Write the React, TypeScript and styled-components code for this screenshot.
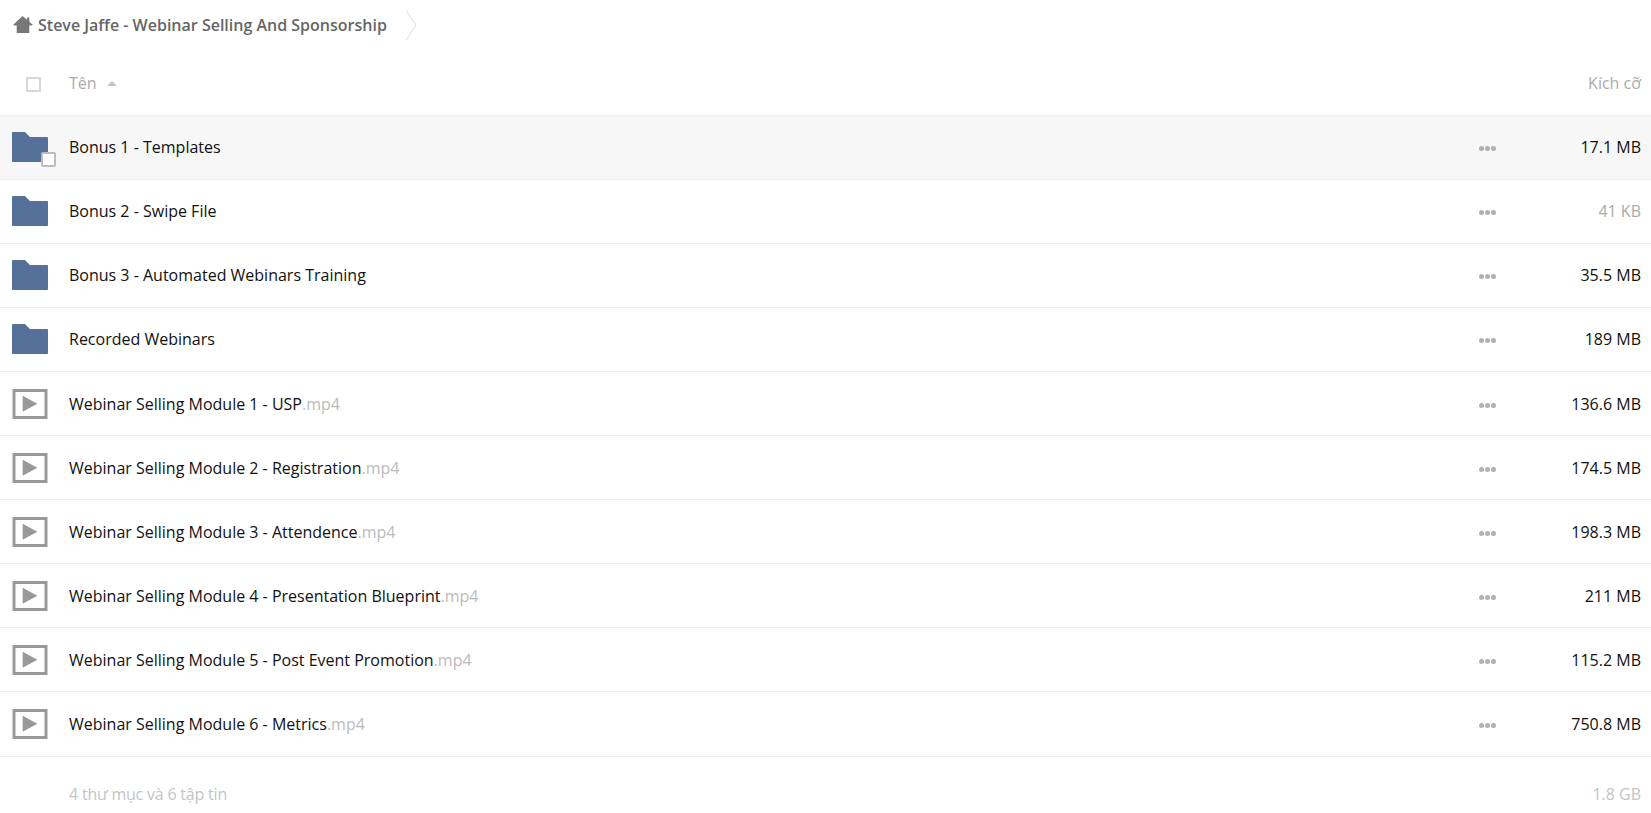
import React from "react";
import styled, {createGlobalStyle} from "styled-components";

const GlobalStyle = createGlobalStyle`
  html, body {
    margin: 0;
    padding: 0;
    background: #fff;
    font-family: "Open Sans", "Liberation Sans", sans-serif;
  }
`

const Page = styled.div`
  width: 1651px;
  height: 813px;
  overflow: hidden;
`

const Breadcrumb = styled.div`
  display: flex;
  align-items: center;
  height: 50px;
  padding-left: 13px;
`

const Crumb = styled.span`
  margin-left: 5px;
  font-size: 16px;
  font-weight: 600;
  color: #666;
  white-space: nowrap;
`

const Chevron = styled.svg`
  margin-left: 18px;
`

const Header = styled.div`
  display: flex;
  align-items: center;
  height: 65.6px;
  padding: 0 10px 0 26px;
  box-sizing: border-box;
  border-bottom: 1px solid #eee;
`

const HeaderCheck = styled.span`
  width: 15px;
  height: 15px;
  margin-top: 4px;
  box-sizing: border-box;
  border: 2px solid #d8d8d8;
  background: #fff;
`

const HeaderName = styled.span`
  margin-left: 28px;
  margin-top: 2px;
  font-size: 16px;
  color: #aaa;
`

const SortArrow = styled.span`
  margin-left: 10px;
  margin-top: 3px;
  width: 0;
  height: 0;
  border-left: 5px solid transparent;
  border-right: 5px solid transparent;
  border-bottom: 5px solid #c4c4c4;
`

const HeaderSize = styled.span`
  margin-left: auto;
  margin-top: 2px;
  font-size: 16px;
  color: #aaa;
`

const Row = styled.div<{$active?: boolean}>`
  display: flex;
  align-items: center;
  height: 64.1px;
  padding: 0 10px 0 12px;
  box-sizing: border-box;
  border-bottom: 1px solid #eee;
  background: ${p => p.$active ? "#f7f7f7" : "#fff"};
`

const IconBox = styled.div`
  position: relative;
  display: flex;
  width: 36px;
  height: 30px;
  flex: none;
`

const RowCheck = styled.span`
  position: absolute;
  left: 29px;
  top: 20px;
  width: 15px;
  height: 15px;
  box-sizing: border-box;
  border: 2px solid #bdbdbd;
  border-radius: 2px;
  background: #fff;
`

const Name = styled.span`
  margin-left: 21px;
  font-size: 16px;
  color: #111;
  white-space: nowrap;
`

const Ext = styled.span`
  color: #bbb;
`

const Dots = styled.div`
  display: flex;
  gap: 1px;
  margin-left: auto;
  margin-top: 3px;
`

const Dot = styled.span`
  width: 5px;
  height: 5px;
  border-radius: 50%;
  background: #b0b0b0;
`

const Size = styled.span<{$muted?: boolean}>`
  width: 145px;
  text-align: right;
  font-size: 16px;
  color: ${p => p.$muted ? "#aaa" : "#111"};
`

const Footer = styled.div`
  display: flex;
  justify-content: space-between;
  padding: 26px 10px 0 69px;
  font-size: 16px;
  color: #c4c4c4;
`

const FooterCount = styled.span`
  letter-spacing: -0.2px;
`

const HomeIcon = () => (
  <svg width="20" height="18" viewBox="0 0 20 18">
    <path fill="#777" d="M9.5 0 L14 3.8 V1.5 H16.3 V5.8 L19.7 8.8 L19 9.6 H16.3 V17 H3.7 V9.6 H1 L0.3 8.8 Z"/>
  </svg>
)

const FolderIcon = () => (
  <svg width="36" height="30" viewBox="0 0 36 30">
    <path fill="#557199" d="M1 0 H13 L18 5 H35 Q36 5 36 6 V29 Q36 30 35 30 H1 Q0 30 0 29 V1 Q0 0 1 0 Z"/>
  </svg>
)

const VideoIcon = () => (
  <svg width="36" height="30" viewBox="0 0 36 30">
    <rect x="2" y="1.5" width="32" height="27" fill="#fff" stroke="#999" strokeWidth="3"/>
    <path fill="#999" d="M10.7 6.7 L25.3 14.7 L10.7 22.7 Z"/>
  </svg>
)

const rows = [
  {name: "Bonus 1 - Templates", size: "17.1 MB", folder: true, active: true},
  {name: "Bonus 2 - Swipe File", size: "41 KB", folder: true, muted: true},
  {name: "Bonus 3 - Automated Webinars Training", size: "35.5 MB", folder: true},
  {name: "Recorded Webinars", size: "189 MB", folder: true},
  {name: "Webinar Selling Module 1 - USP", size: "136.6 MB"},
  {name: "Webinar Selling Module 2 - Registration", size: "174.5 MB"},
  {name: "Webinar Selling Module 3 - Attendence", size: "198.3 MB"},
  {name: "Webinar Selling Module 4 - Presentation Blueprint", size: "211 MB"},
  {name: "Webinar Selling Module 5 - Post Event Promotion", size: "115.2 MB"},
  {name: "Webinar Selling Module 6 - Metrics", size: "750.8 MB"},
]

export default function App() {
  return (
    <Page>
      <GlobalStyle/>
      <Breadcrumb>
        <HomeIcon/>
        <Crumb>Steve Jaffe - Webinar Selling And Sponsorship</Crumb>
        <Chevron width="12" height="32" viewBox="0 0 12 32">
          <path fill="none" stroke="#ddd" d="M1 1 L11 16 L1 31"/>
        </Chevron>
      </Breadcrumb>
      <Header>
        <HeaderCheck/>
        <HeaderName>Tên</HeaderName>
        <SortArrow/>
        <HeaderSize>Kích cỡ</HeaderSize>
      </Header>
      {rows.map(r => (
        <Row key={r.name} $active={r.active}>
          <IconBox>
            {r.folder ? <FolderIcon/> : <VideoIcon/>}
            {r.active && <RowCheck/>}
          </IconBox>
          <Name>
            {r.name}
            {!r.folder && <Ext>.mp4</Ext>}
          </Name>
          <Dots><Dot/><Dot/><Dot/></Dots>
          <Size $muted={r.muted}>{r.size}</Size>
        </Row>
      ))}
      <Footer>
        <FooterCount>4 thư mục và 6 tập tin</FooterCount>
        <span>1.8 GB</span>
      </Footer>
    </Page>
  )
}
